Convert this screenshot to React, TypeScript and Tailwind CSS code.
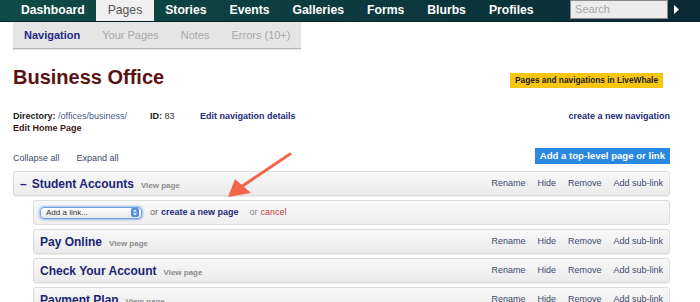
const font = { fontFamily: '"Liberation Sans", Arial, sans-serif' };

const navItems = ["Dashboard", "Pages", "Stories", "Events", "Galleries", "Forms", "Blurbs", "Profiles"];
const subItems = ["Navigation", "Your Pages", "Notes", "Errors (10+)"];

function RowActions() {
  return (
    <div className="flex gap-[12px] whitespace-nowrap text-[9px] text-[#3e4a6c]">
      <a href="#">Rename</a>
      <a href="#">Hide</a>
      <a href="#">Remove</a>
      <a href="#">Add sub-link</a>
    </div>
  );
}

function NavRow({ title, top }: { title: string; top?: boolean }) {
  return (
    <div className="mb-[4px] flex h-[25px] items-center justify-between rounded-[3px] border border-[#dcdcdc] bg-gradient-to-b from-[#f8f8f8] to-[#ebebeb] pl-[6px] pr-[6px] shadow-[0_1px_1px_rgba(0,0,0,0.08)]">
      <div className="flex items-baseline whitespace-nowrap">
        {top && <span className="mr-[5px] text-[12px] font-bold text-[#1b2574]">–</span>}
        <span className="text-[12px] font-bold text-[#1b2574]">{title}</span>
        <span className="ml-[7px] text-[8px] font-bold text-[#8c8c8c]">View page</span>
      </div>
      <RowActions />
    </div>
  );
}

export default function App() {
  return (
    <div className="relative h-[302px] w-[700px] overflow-hidden bg-white" style={font}>
      {/* top bar */}
      <div className="flex h-[22px] items-stretch border-b border-[#07222a] bg-gradient-to-r from-[#0f4b47] to-[#0a2a35] pl-[9.5px]">
        {navItems.map((n) =>
          n === "Pages" ? (
            <div key={n} className="flex items-center whitespace-nowrap bg-[#f0f0f0] px-[11.5px] text-[12.2px] text-[#555]">
              {n}
            </div>
          ) : (
            <div key={n} className="flex items-center whitespace-nowrap px-[11.5px] text-[12.2px] font-bold text-white">
              {n}
            </div>
          )
        )}
        <div className="ml-[25px] flex h-[19px] w-[98px] items-center border border-[#8a8a8a] bg-[#ececec] pl-[4px] text-[11px] text-[#a8a8a8]">
          Search
        </div>
        <svg width="6" height="9" viewBox="0 0 6 9" className="ml-[6px] mt-[5px]">
          <polygon points="0,0 5,4.5 0,9" fill="#fff" />
        </svg>
      </div>

      {/* sub nav */}
      <div className="ml-[13px] flex h-[27px] w-fit items-center border-b border-[#b9b9b9] bg-[#e5e5e5] shadow-[0_1px_1px_rgba(0,0,0,0.1)]">
        {subItems.map((s, i) => (
          <span key={s} className={`whitespace-nowrap px-[11px] text-[11px] ${i === 0 ? "font-bold text-[#1f2a85]" : "text-[#a9a9a9]"}`}>
            {s}
          </span>
        ))}
      </div>

      <div className="pl-[13px] pr-[30px]">
        {/* title */}
        <div className="mt-[16px] flex items-start justify-between">
          <h1 className="text-[20px] font-bold leading-[24px] text-[#5b1111]">Business Office</h1>
          <div className="mr-[7px] mt-[8px] flex h-[15px] items-center whitespace-nowrap bg-[#f7c512] px-[5px] text-[8.3px] font-bold text-[#222]">
            Pages and navigations in LiveWhale
          </div>
        </div>

        {/* details */}
        <div className="mt-[21px] flex justify-between text-[9px] leading-[12px]">
          <div>
            <div className="flex whitespace-nowrap">
              <span className="w-[137px]">
                <b className="text-[#222]">Directory:</b> <span className="text-[#4b5a8a]">/offices/business/</span>
              </span>
              <span className="w-[50px]">
                <b className="text-[#222]">ID:</b> <span className="text-[#333]">83</span>
              </span>
              <a href="#" className="font-bold text-[#1f2a7a]">Edit navigation details</a>
            </div>
            <div className="font-bold text-[#3a1c1c]">Edit Home Page</div>
          </div>
          <a href="#" className="font-bold text-[#1f2a7a]">create a new navigation</a>
        </div>

        {/* controls */}
        <div className="mt-[14px] flex h-[16px] items-end justify-between">
          <div className="flex gap-[17px] text-[9px] leading-[12px] text-[#3e4a6c]">
            <a href="#">Collapse all</a>
            <a href="#">Expand all</a>
          </div>
          <div className="flex h-[16px] items-center whitespace-nowrap bg-[#2a88e0] px-[5px] text-[9.6px] font-bold text-white">
            Add a top-level page or link
          </div>
        </div>

        {/* tree */}
        <div className="mt-[7px]">
          <NavRow title="Student Accounts" top />
          <div className="ml-[20px]">
            <div className="mb-[4px] flex h-[25px] items-center whitespace-nowrap rounded-[3px] border border-[#dcdcdc] bg-gradient-to-b from-[#f8f8f8] to-[#efefef] pl-[6px] text-[9px]">
              <div className="flex h-[12px] w-[102px] items-center justify-between rounded-[4px] border border-[#6f9fdc] bg-gradient-to-b from-white to-[#e8e8e8] pl-[5px] pr-[2px] text-[8px] text-[#333] shadow-[0_0_2px_1px_rgba(90,150,230,0.6)]">
                <span>Add a link...</span>
                <svg width="8" height="9" viewBox="0 0 8 9">
                  <rect x="0" y="0" width="8" height="9" rx="2" fill="#4d8fe0" />
                  <polygon points="4,1.5 6,3.8 2,3.8" fill="#fff" />
                  <polygon points="4,7.5 6,5.2 2,5.2" fill="#fff" />
                </svg>
              </div>
              <span className="ml-[8px] text-[#666]">or</span>
              <a href="#" className="ml-[3px] font-bold text-[#1f2a7a]">create a new page</a>
              <span className="ml-[11px] text-[#888]">or</span>
              <a href="#" className="ml-[3px] text-[#c83a3a]">cancel</a>
            </div>
            <NavRow title="Pay Online" />
            <NavRow title="Check Your Account" />
            <NavRow title="Payment Plan" />
          </div>
        </div>
      </div>

      {/* annotation arrow */}
      <svg className="absolute left-0 top-0" width="700" height="302">
        <line x1="290" y1="154" x2="241" y2="187" stroke="#f2654d" strokeWidth="3" strokeLinecap="round" />
        <polygon points="228,197 235,179 251,193" fill="#f2654d" />
      </svg>
    </div>
  );
}
